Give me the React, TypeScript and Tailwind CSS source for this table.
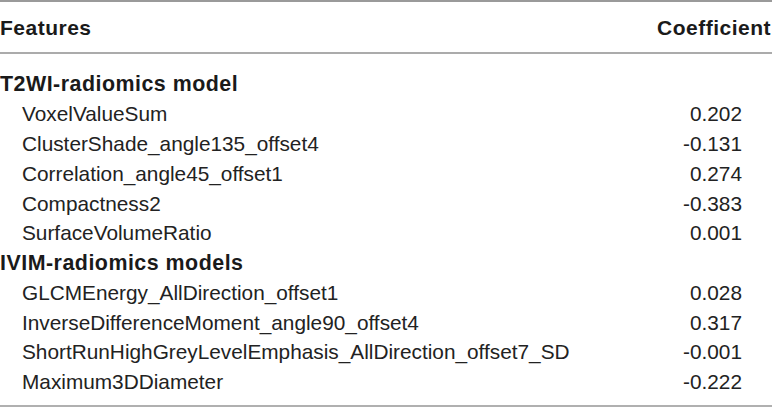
const rows = [
  { type: "group", label: "T2WI-radiomics model" },
  { type: "item", label: "VoxelValueSum", value: "0.202" },
  { type: "item", label: "ClusterShade_angle135_offset4", value: "-0.131" },
  { type: "item", label: "Correlation_angle45_offset1", value: "0.274" },
  { type: "item", label: "Compactness2", value: "-0.383" },
  { type: "item", label: "SurfaceVolumeRatio", value: "0.001" },
  { type: "group", label: "IVIM-radiomics models" },
  { type: "item", label: "GLCMEnergy_AllDirection_offset1", value: "0.028" },
  { type: "item", label: "InverseDifferenceMoment_angle90_offset4", value: "0.317" },
  { type: "item", label: "ShortRunHighGreyLevelEmphasis_AllDirection_offset7_SD", value: "-0.001" },
  { type: "item", label: "Maximum3DDiameter", value: "-0.222" },
];

const App = () => {
  return (
    <div className="w-[772px] h-[411px] bg-white text-[#1a1a1a] font-['Liberation_Sans',Arial,sans-serif]">
      <div className="border-t-2 border-[#9a9a9a]" />
      <div className="flex items-center justify-between h-[52px] border-b-2 border-[#ababab] text-[21px] font-bold tracking-[0.5px]">
        <span className="pt-[2px]">Features</span>
        <span className="pt-[2px] pr-[1px]">Coefficient</span>
      </div>
      <div className="pt-[15px] pb-[8px] border-b-2 border-[#b0b0b0]">
        {rows.map((r, i) =>
          r.type === "group" ? (
            <div key={i} className="flex items-center h-[29.8px] text-[21.4px] font-bold tracking-[0.5px]">
              {r.label}
            </div>
          ) : (
            <div key={i} className="flex items-center justify-between h-[29.8px] text-[20.8px] text-[#222]">
              <span className="pl-[22px]">{r.label}</span>
              <span className="pr-[30px]">{r.value}</span>
            </div>
          )
        )}
      </div>
    </div>
  );
};

export default App;
